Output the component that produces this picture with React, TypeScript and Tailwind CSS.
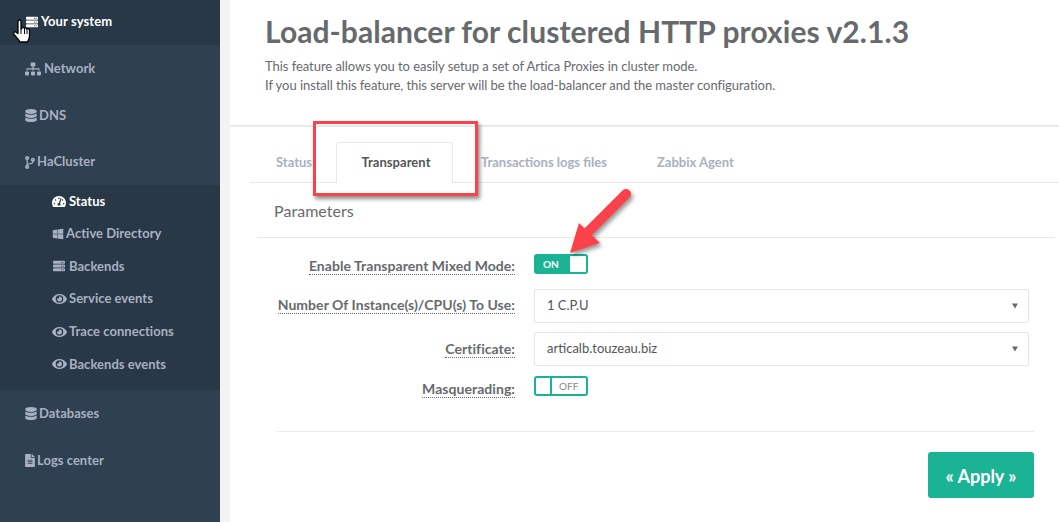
import React from "react";
import {
  FaServer,
  FaSitemap,
  FaDatabase,
  FaCodeBranch,
  FaTachometerAlt,
  FaWindows,
  FaEye,
  FaFileAlt,
} from "react-icons/fa";

const mainMenuTop = [
  { label: "Network", icon: <FaSitemap className="w-4 h-4" />, gap: "ml-[3px]", height: "h-[46px]" },
  { label: "DNS", icon: <FaDatabase className="w-3 h-[13px]" />, gap: "ml-[2px]", height: "h-[47px]" },
  { label: "HaCluster", icon: <FaCodeBranch className="w-[10px] h-[13px]" />, gap: "ml-[2px]", height: "h-[46px]" },
];

const subMenu = [
  { label: "Status", icon: <FaTachometerAlt className="w-[14px] h-[13px]" />, active: true, gap: "gap-[3px]" },
  { label: "Active Directory", icon: <FaWindows className="w-3 h-3" />, gap: "gap-[2px]" },
  { label: "Backends", icon: <FaServer className="w-[14px] h-3" />, gap: "gap-[3px]" },
  { label: "Service events", icon: <FaEye className="w-[15px] h-[14px]" />, gap: "gap-[2px]" },
  { label: "Trace connections", icon: <FaEye className="w-[15px] h-[14px]" />, gap: "gap-[2px]" },
  { label: "Backends events", icon: <FaEye className="w-[15px] h-[14px]" />, gap: "gap-[2px]" },
];

const Sidebar = () => (
  <aside className="w-[220px] shrink-0 h-[522px] bg-[#2f4050] text-[13px] font-bold text-[#a7b1c2] tracking-[0.03px]">
    <div className="h-[45px] bg-[#293846] flex items-center pl-[25px] pb-[2px] text-white">
      <FaServer className="w-[14px] h-3" />
      <span className="ml-[2px] tracking-[0.1px]">Your system</span>
    </div>
    {mainMenuTop.map((item) => (
      <div key={item.label} className={`${item.height} flex items-center pl-[25px] pt-[2px]`}>
        {item.icon}
        <span className={item.gap}>{item.label}</span>
      </div>
    ))}
    <div className="h-[205px] mt-[1px] bg-[#293846]">
      {subMenu.map((item) => (
        <div
          key={item.label}
          className={`h-[32.6px] flex items-center pl-[52px] ${item.gap} ${item.active ? "text-white" : ""}`}
        >
          {item.icon}
          <span>{item.label}</span>
        </div>
      ))}
    </div>
    <div className="h-[46.5px] flex items-center pl-[25px]">
      <FaDatabase className="w-3 h-[13px]" />
      <span className="ml-[2px]">Databases</span>
    </div>
    <div className="h-[46.5px] flex items-center pl-[25px] pt-[2px]">
      <FaFileAlt className="w-[10px] h-[13px]" />
      <span className="ml-[2px]">Logs center</span>
    </div>
  </aside>
);

const Caret = () => (
  <span className="absolute right-[10px] top-1/2 -translate-y-1/2 border-x-[3.5px] border-x-transparent border-t-[5px] border-t-[#6b6b6b]" />
);

const Select = ({ value }: { value: string }) => (
  <div className="relative w-[495px] h-[34px] border border-[#e5e6e7] rounded-[2px] bg-white flex items-center pl-[12px] text-[13px] text-[#555]">
    {value}
    <Caret />
  </div>
);

const Row = ({
  label,
  className,
  labelClass,
  children,
}: {
  label: string;
  className?: string;
  labelClass?: string;
  children: React.ReactNode;
}) => (
  <div className={`flex items-center gap-[19px] pl-[20px] ${className ?? ""}`}>
    <div className={`w-[265px] shrink-0 text-right text-[14px] tracking-[0.05px] font-bold text-[#676a6c] ${labelClass ?? ""}`}>
      <span className="border-b border-dotted border-[#676a6c]">{label}</span>
    </div>
    {children}
  </div>
);

export default function App() {
  return (
    <div className="relative w-[1059px] h-[522px] overflow-hidden flex bg-white font-['Lato','Open_Sans',sans-serif] text-[#676a6c]">
      <Sidebar />
      <div className="w-[10px] shrink-0 bg-[#f3f3f4]" />

      <main className="flex-1 min-w-0">
        <header className="h-[127px] border-b-2 border-[#e7eaec] pl-[35px] pt-[12px]">
          <h1 className="text-[30px] leading-[38px] font-bold tracking-[0.07px]">
            Load-balancer for clustered HTTP proxies v2.1.3
          </h1>
          <p className="mt-[7px] text-[13px] leading-[19px] tracking-[-0.05px]">
            This feature allows you to easily setup a set of Artica Proxies in cluster mode.
            <br />
            If you install this feature, this server will be the load-balancer and the master configuration.
          </p>
        </header>

        {/* tabs */}
        <nav className="mt-[15px] ml-[20px] h-[41px] border-b border-[#e7eaec] flex text-[13px] font-bold text-[#a7b1c2]">
          <div className="w-[86px] pl-[26px] leading-[40px]">Status</div>
          <div className="w-[117px] h-[41px] border border-b-0 border-[#e7eaec] rounded-t-[3px] bg-white text-center leading-[39px] text-[#555] pl-[3px] tracking-[0.05px]">
            Transparent
          </div>
          <div className="w-[175px] pl-[28px] leading-[40px]">Transactions logs files</div>
          <div className="pl-[29px] leading-[40px]">Zabbix Agent</div>
        </nav>

        <div className="ml-[27px] mr-[4px] h-[55px] border-b border-[#e7eaec] pl-[17px] pt-[16px] text-[16px] leading-[24px] tracking-[0.05px]">
          Parameters
        </div>

        <Row label="Enable Transparent Mixed Mode:" className="mt-[16px] h-[20px]" labelClass="pt-[2px]">
          <div className="w-[54px] h-[20px] rounded-[3px] bg-[#1ab394] flex items-center justify-between pl-[9px] pr-[2px] text-[10px] font-bold text-white">
            ON
            <span className="w-[16px] h-[16px] bg-white rounded-[1px]" />
          </div>
        </Row>
        <Row label="Number Of Instance(s)/CPU(s) To Use:" className="mt-[15px]" labelClass="pb-[4px]">
          <Select value="1 C.P.U" />
        </Row>
        <Row label="Certificate:" className="mt-[9px]" labelClass="pb-[2px]">
          <Select value="articalb.touzeau.biz" />
        </Row>
        <Row label="Masquerading:" className="mt-[10px] h-[20px]" labelClass="pt-[4px]">
          <div className="w-[54px] h-[20px] rounded-[3px] border-2 border-[#1ab394] flex items-center text-[10px] text-[#888]">
            <span className="w-[16px] h-full border-r-2 border-[#1ab394]" />
            <span className="pl-[7px]">OFF</span>
          </div>
        </Row>

        <div className="ml-[47px] mr-[25px] mt-[35px] border-t border-[#e7eaec] flex justify-end pt-[20px]">
          <button className="w-[106px] h-[46px] rounded-[3px] bg-[#1ab394] text-white text-[18px] font-bold pt-[2px]">
            « Apply »
          </button>
        </div>
      </main>

      {/* screenshot annotations */}
      <div className="absolute left-[313px] top-[121px] w-[165px] h-[75px] border-[3px] border-[#fb424a] shadow-[2px_3px_4px_rgba(0,0,0,0.45)]" />
      <svg className="absolute left-[560px] top-[180px]" width="80" height="80" viewBox="0 0 80 80">
        <g style={{ filter: "drop-shadow(2px 3px 2px rgba(0,0,0,0.4))" }}>
          <path d="M66 14 L28 52" stroke="#fb424a" strokeWidth="10" strokeLinecap="round" />
          <path d="M10 73 L19 43 L40 63 Z" fill="#fb424a" />
        </g>
      </svg>
      {/* mouse pointer */}
      <svg className="absolute left-[12px] top-[18px]" width="20" height="26" viewBox="0 0 20 26">
        <path
          d="M6 3.5 C6 1.5 9 1.5 9 3.5 V11 L10 10 C11 9 12 9.5 12.5 10.5 C13.5 9.5 14.5 10 15 11 C16 10.3 17.5 11 17.5 12.5 V18 C17.5 20.5 16.5 22 15.5 24 H8 C7 22 4.5 19.5 2 16.5 C0.8 15 2.5 13 4.2 14.2 L6 15.5 Z"
          fill="#fff"
          stroke="#000"
          strokeWidth="1.3"
          strokeLinejoin="round"
        />
        <path d="M9 11 V16 M12.5 10.5 V16 M15 11 V16" stroke="#000" strokeWidth="1" />
      </svg>
    </div>
  );
}
